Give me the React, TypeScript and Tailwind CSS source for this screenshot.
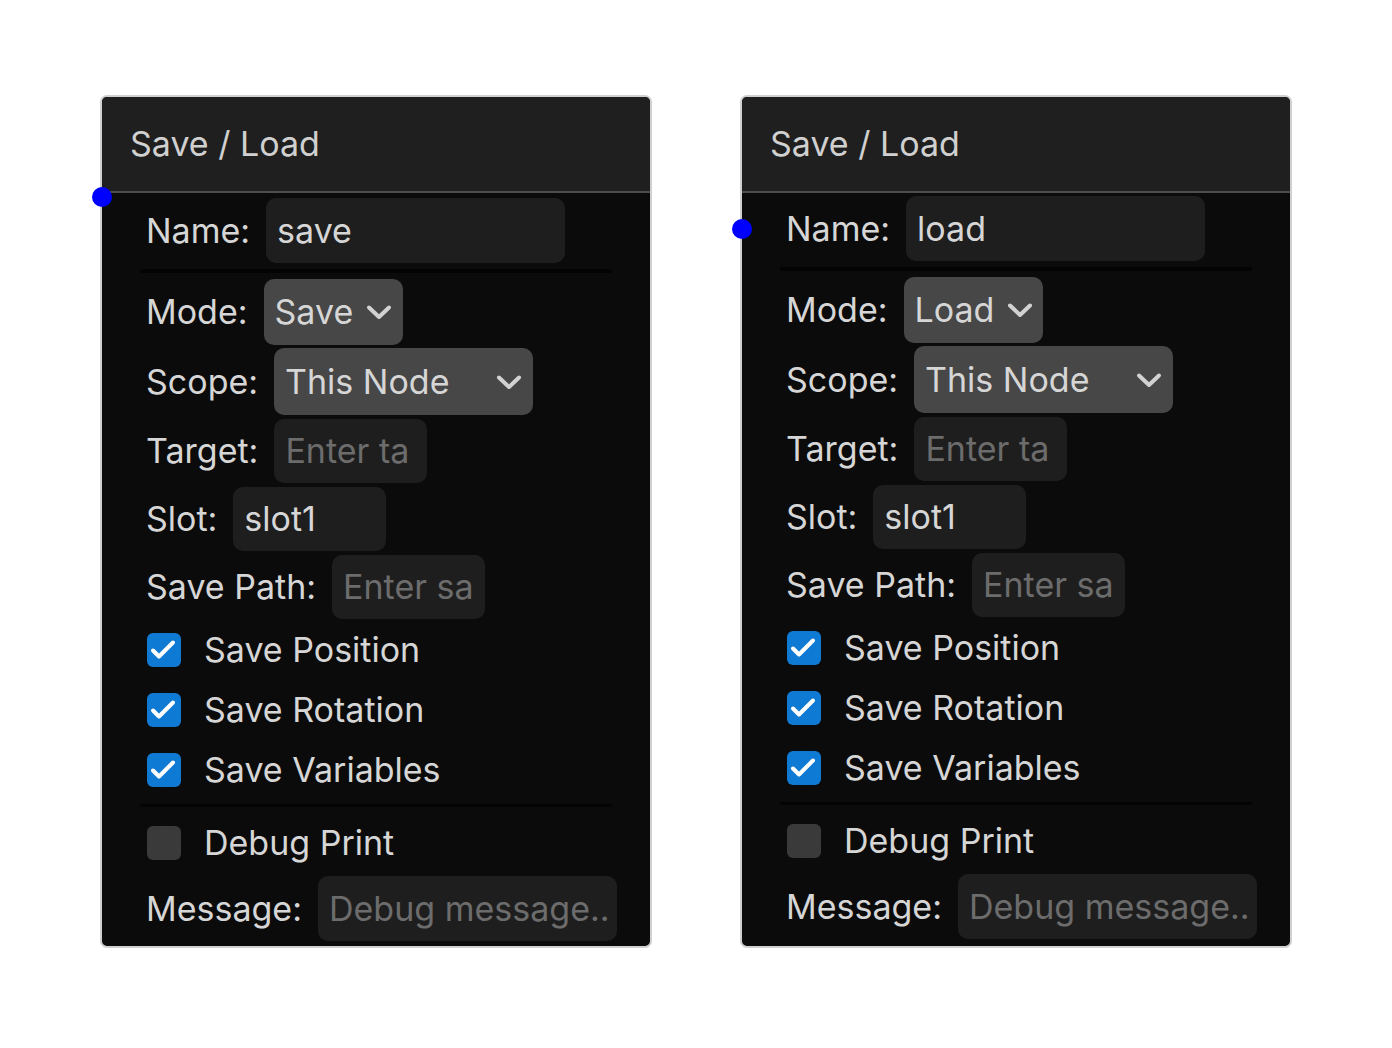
import React from "react";

const font = { fontFamily: "Inter, 'Noto Sans', sans-serif" };

function Chevron() {
  return (
    <svg width="28" height="28" viewBox="0 0 28 28" className="shrink-0">
      <polyline points="4,9.5 14,19 24,9.5" fill="none" stroke="#d2d2d2" strokeWidth="4" strokeLinecap="round" strokeLinejoin="round" />
    </svg>
  );
}

function Check({ on }: { on: boolean }) {
  return on ? (
    <div className="w-[34px] h-[34px] rounded-[6px] bg-[#0f7ad3] shrink-0">
      <svg width="34" height="34" viewBox="0 0 34 34">
        <polyline points="6,17.5 12,23.5 26,9.5" fill="none" stroke="#ffffff" strokeWidth="4" strokeLinecap="round" strokeLinejoin="round" />
      </svg>
    </div>
  ) : (
    <div className="w-[34px] h-[34px] rounded-[6px] bg-[#3a3a3a] shrink-0" />
  );
}

function Label({ children }: { children: React.ReactNode }) {
  return <span className="text-[#d6d6d6] text-[34px] leading-none whitespace-nowrap">{children}</span>;
}

function Input({ w, h, value, placeholder }: { w: string; h: string; value?: string; placeholder?: string }) {
  return (
    <div className={`${w} ${h} rounded-[10px] bg-[#1e1e1e] flex items-center pl-[11px] overflow-hidden shrink-0`}>
      {value ? (
        <span className="text-[#d6d6d6] text-[34px] leading-none whitespace-nowrap">{value}</span>
      ) : (
        <span className="text-[#6c6c6c] text-[34px] leading-none whitespace-nowrap">{placeholder}</span>
      )}
    </div>
  );
}

function Panel({ name, mode, shift }: { name: string; mode: string; shift: boolean }) {
  return (
    <div className="relative w-[552px] h-[853px] rounded-[7px] border-2 border-[#d0d0d0] bg-[#0b0b0b] overflow-visible flex flex-col shrink-0">
      <div className="h-[96px] bg-[#1f1f1f] border-b-2 border-[#4d4d4d] rounded-t-[5px] flex items-center pl-[28px] shrink-0">
        <span className="text-[#d0d0d0] text-[34px] leading-none">Save / Load</span>
      </div>
      <div
        className={`absolute w-[20px] h-[20px] rounded-full bg-[#0000ff] left-[-10px] ${shift ? "top-[122px]" : "top-[90px]"}`}
      />
      <div className={`flex flex-col px-[38px] ${shift ? "pt-[3px]" : "pt-[5px]"}`}>
        <div className="h-[65px] flex items-center gap-[16px] pl-[6px]">
          <Label>Name:</Label>
          <Input w="w-[299px]" h="h-[65px]" value={name} />
        </div>
        <div className="mt-[6px] h-[4px] bg-[#040404]" />
        <div className="mt-[6px] h-[66px] flex items-center gap-[16px] pl-[6px]">
          <Label>Mode:</Label>
          <div className="h-[66px] w-[139px] rounded-[10px] bg-[#474747] flex items-center pl-[11px] gap-[12px]">
            <span className="text-[#d6d6d6] text-[34px] leading-none">{mode}</span>
            <Chevron />
          </div>
        </div>
        <div className="mt-[3px] h-[67px] flex items-center gap-[16px] pl-[6px]">
          <Label>Scope:</Label>
          <div className="h-[67px] w-[259px] rounded-[10px] bg-[#474747] flex items-center justify-between pl-[11px] pr-[10px]">
            <span className="text-[#d6d6d6] text-[34px] leading-none">This Node</span>
            <Chevron />
          </div>
        </div>
        <div className="mt-[4px] h-[64px] flex items-center gap-[16px] pl-[6px]">
          <Label>Target:</Label>
          <Input w="w-[153px]" h="h-[64px]" placeholder="Enter ta" />
        </div>
        <div className="mt-[4px] h-[64px] flex items-center gap-[16px] pl-[6px]">
          <Label>Slot:</Label>
          <Input w="w-[153px]" h="h-[64px]" value="slot1" />
        </div>
        <div className="mt-[4px] h-[64px] flex items-center gap-[16px] pl-[6px]">
          <Label>Save Path:</Label>
          <Input w="w-[153px]" h="h-[64px]" placeholder="Enter sa" />
        </div>
        {["Save Position", "Save Rotation", "Save Variables"].map((t, i) => (
          <div key={t} className={`h-[60px] flex items-center gap-[23px] pl-[7px] ${i === 0 ? "mt-[1px]" : ""}`}>
            <Check on={true} />
            <Label>{t}</Label>
          </div>
        ))}
        <div className="mt-[4px] h-[3px] bg-[#040404]" />
        <div className="mt-[6px] h-[60px] flex items-center gap-[23px] pl-[7px]">
          <Check on={false} />
          <Label>Debug Print</Label>
        </div>
        <div className="mt-[3px] h-[65px] flex items-center gap-[16px] pl-[6px]">
          <Label>Message:</Label>
          <Input w="w-[299px]" h="h-[65px]" placeholder="Debug message.." />
        </div>
      </div>
    </div>
  );
}

export default function App() {
  return (
    <div className="w-[1392px] h-[1048px] bg-white flex items-start gap-[88px] pl-[100px] pt-[95px]" style={font}>
      <Panel name="save" mode="Save" shift={false} />
      <Panel name="load" mode="Load" shift={true} />
    </div>
  );
}
